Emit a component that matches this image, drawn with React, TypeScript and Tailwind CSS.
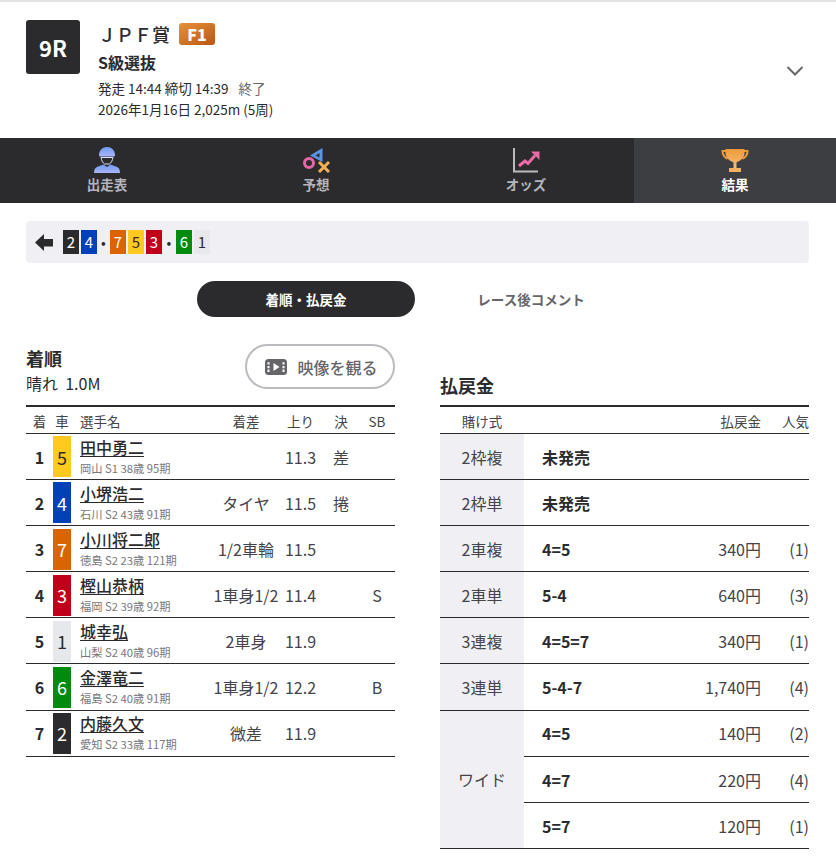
const font = { fontFamily: '"Noto Sans CJK JP", "Noto Sans", sans-serif' };

const bike: Record<number, string> = {
  1: 'bg-[#e6e8eb] text-[#2b2b2e]',
  2: 'bg-[#2b2b2e] text-white',
  3: 'bg-[#c0001a] text-white',
  4: 'bg-[#0040b8] text-white',
  5: 'bg-[#ffc91f] text-[#2b2b2e]',
  6: 'bg-[#008a0e] text-white',
  7: 'bg-[#dc6400] text-white',
};

const riders = [
  { pos: 1, no: 5, name: '田中勇二', info: '岡山 S1 38歳 95期', diff: '', last: '11.3', kim: '差', sb: '' },
  { pos: 2, no: 4, name: '小堺浩二', info: '石川 S2 43歳 91期', diff: 'タイヤ', last: '11.5', kim: '捲', sb: '' },
  { pos: 3, no: 7, name: '小川将二郎', info: '徳島 S2 23歳 121期', diff: '1/2車輪', last: '11.5', kim: '', sb: '' },
  { pos: 4, no: 3, name: '樫山恭柄', info: '福岡 S2 39歳 92期', diff: '1車身1/2', last: '11.4', kim: '', sb: 'S' },
  { pos: 5, no: 1, name: '城幸弘', info: '山梨 S2 40歳 96期', diff: '2車身', last: '11.9', kim: '', sb: '' },
  { pos: 6, no: 6, name: '金澤竜二', info: '福島 S2 40歳 91期', diff: '1車身1/2', last: '12.2', kim: '', sb: 'B' },
  { pos: 7, no: 2, name: '内藤久文', info: '愛知 S2 33歳 117期', diff: '微差', last: '11.9', kim: '', sb: '' },
];

const payouts = [
  { label: '2枠複', rows: [{ bet: '未発売', yen: '', pop: '' }] },
  { label: '2枠単', rows: [{ bet: '未発売', yen: '', pop: '' }] },
  { label: '2車複', rows: [{ bet: '4=5', yen: '340円', pop: '(1)' }] },
  { label: '2車単', rows: [{ bet: '5-4', yen: '640円', pop: '(3)' }] },
  { label: '3連複', rows: [{ bet: '4=5=7', yen: '340円', pop: '(1)' }] },
  { label: '3連単', rows: [{ bet: '5-4-7', yen: '1,740円', pop: '(4)' }] },
  {
    label: 'ワイド',
    rows: [
      { bet: '4=5', yen: '140円', pop: '(2)' },
      { bet: '4=7', yen: '220円', pop: '(4)' },
      { bet: '5=7', yen: '120円', pop: '(1)' },
    ],
  },
];

function HelmetIcon() {
  return (
    <svg width="28" height="28" viewBox="0 0 28 28">
      <defs>
        <linearGradient id="hg" x1="0" y1="0" x2="0" y2="1">
          <stop offset="0" stopColor="#6f9cf2" />
          <stop offset="1" stopColor="#a9b4f5" />
        </linearGradient>
      </defs>
      <path d="M6 9.500C6 4 9.500 1 14 1s8 3 8 8.500c0 .5-.5 1-1 1H7c-.5 0-1-.5-1-1z" fill="url(#hg)" />
      <path d="M8 11.500h12c-.5 3-2 5.500-3.500 6.500h-5C10 17 8.500 14.500 8 11.500z" fill="#2b2b2e" stroke="#dfe4f8" strokeWidth="1" />
      <path d="M1 27c0-3.500 1-5.500 4-6.500l5.500-2 3.500 2.500 3.500-2.500 5.500 2c3 1 4 3 4 6.500z" fill="url(#hg)" />
    </svg>
  );
}

function ShapesIcon() {
  return (
    <svg width="28" height="28" viewBox="0 0 28 28">
      <path d="M20.500 2v14L8 9.500z" fill="#5b94e6" />
      <path d="M17.500 7v4.500L13.500 9.500z" fill="#2b2b2e" />
      <circle cx="7" cy="17" r="4.500" fill="none" stroke="#e766a6" strokeWidth="3" />
      <path d="M17 16l10 10M27 16l-10 10" stroke="#f3b04e" strokeWidth="3" />
    </svg>
  );
}

function ChartIcon() {
  return (
    <svg width="28" height="28" viewBox="0 0 28 28">
      <path d="M2 2v23.500h24" fill="none" stroke="#b9bac0" strokeWidth="2" />
      <path d="M7 20l6-5 3 2.500 7-8" fill="none" stroke="#ec6aa6" strokeWidth="3" />
      <path d="M19 5.500h8.500V14z" fill="#ec6aa6" />
    </svg>
  );
}

function TrophyIcon() {
  return (
    <svg width="28" height="28" viewBox="0 0 28 28">
      <defs>
        <linearGradient id="tg" x1="0" y1="0" x2="0" y2="1">
          <stop offset="0" stopColor="#ee9a38" />
          <stop offset="1" stopColor="#f5bd7a" />
        </linearGradient>
      </defs>
      <path d="M4.500 3h19v4c0 5-4.500 8-8 9.500V22h-3v-5.500C9 15 4.500 12 4.500 7z" fill="url(#tg)" />
      <path d="M5 5H1.500c0 4 1.500 6 5 8M23 5h3.500c0 4-1.500 6-5 8" fill="none" stroke="#ee9a38" strokeWidth="2" />
      <path d="M8 22h12v4H8z" fill="#f3b263" />
    </svg>
  );
}

function FilmIcon() {
  return (
    <svg width="22" height="16" viewBox="0 0 22 16">
      <rect x="0" y="0" width="22" height="16" rx="3.500" fill="#66666a" />
      <path d="M8.500 4l6 4-6 4z" fill="#fff" />
      <path d="M2.500 3.200h2v2.300h-2zM2.500 6.900h2v2.300h-2zM2.500 10.600h2v2.300h-2zM17.500 3.200h2v2.300h-2zM17.500 6.900h2v2.300h-2zM17.500 10.600h2v2.300h-2z" fill="#fff" />
    </svg>
  );
}

function NavTab({ icon, label, width, active }: { icon: React.ReactNode; label: string; width: string; active?: boolean }) {
  return (
    <div className={`${width} flex flex-col items-center pt-[8px] ${active ? 'bg-[#3d3e42] text-white' : 'text-[#b4b6bd]'}`}>
      {icon}
      <span className="text-[13.5px] font-bold leading-[19px] mt-[1px]">{label}</span>
    </div>
  );
}

function Chip({ no }: { no: number }) {
  return <span className={`w-[16px] h-[24px] flex items-center justify-center text-[15px] ${bike[no]}`}>{no}</span>;
}

export default function App() {
  return (
    <div style={font} className="w-[836px] h-[862px] overflow-hidden bg-white text-[#2b2b2e]">
      <div className="h-[2px] bg-[#e4e4e6]" />
      <div className="h-[136px] flex items-start pl-[26px] pr-[32px] pt-[18px]">
        <div className="w-[54px] h-[54px] rounded-[3px] bg-[#2b2b2e] text-white flex items-center justify-center text-[22px] font-bold">9R</div>
        <div className="ml-[18px] flex-1 -mt-[1px]">
          <div className="flex items-center h-[30px]">
            <span className="text-lg font-medium leading-[30px]">ＪＰＦ賞</span>
            <span className="ml-[9px] w-[36px] h-[22px] rounded-[3px] bg-gradient-to-br from-[#e8913a] to-[#b9560f] text-white text-base font-black flex items-center justify-center">F1</span>
          </div>
          <div className="text-base font-bold leading-[26px]">S級選抜</div>
          <div className="text-[13.5px] leading-[21px] mt-[3px]">
            発走 14:44 締切 14:39<span className="ml-[10px] text-[#66666a]">終了</span>
          </div>
          <div className="text-[13.5px] leading-[21px]">2026年1月16日 2,025m (5周)</div>
        </div>
        <svg className="mt-[45px]" width="18" height="12" viewBox="0 0 18 12">
          <path d="M1.500 2l7.500 7.500L16.500 2" fill="none" stroke="#66666a" strokeWidth="2" />
        </svg>
      </div>

      <div className="h-[65px] flex bg-[#2b2b2e]">
        <NavTab icon={<HelmetIcon />} label="出走表" width="w-[214px]" />
        <NavTab icon={<ShapesIcon />} label="予想" width="w-[204px]" />
        <NavTab icon={<ChartIcon />} label="オッズ" width="w-[216px]" />
        <NavTab icon={<TrophyIcon />} label="結果" width="w-[202px]" active />
      </div>

      <div className="ml-[26px] mr-[27px] mt-[18px] h-[42px] rounded-[4px] bg-[#f0f0f4] flex items-center pl-[9px]">
        <svg width="18" height="17" viewBox="0 0 18 17">
          <path d="M0 8.500L9 0v5h9v7.500H9V17z" fill="#2b2b2e" />
        </svg>
        <div className="ml-[10px] flex items-center gap-[2px]">
          <Chip no={2} />
          <Chip no={4} />
          <span className="w-[9px] text-center text-sm leading-none">•</span>
          <Chip no={7} />
          <Chip no={5} />
          <Chip no={3} />
          <span className="w-[10px] text-center text-sm leading-none">•</span>
          <Chip no={6} />
          <Chip no={1} />
        </div>
      </div>

      <div className="mt-[18px] flex pl-[197px]">
        <div className="w-[218px] h-[36px] rounded-full bg-[#2b2b2e] text-white text-[13.5px] font-bold flex items-center justify-center">着順・払戻金</div>
        <div className="w-[232px] h-[36px] text-[#66666a] text-[13.5px] font-bold flex items-center justify-center">レース後コメント</div>
      </div>

      <div className="flex pl-[26px] pr-[27px] justify-between mt-[27px]">
        <div className="w-[369px]">
          <div className="h-[61px] flex justify-between items-start">
            <div>
              <div className="text-lg font-bold leading-[26px] mt-[1px]">着順</div>
              <div className="text-base leading-[22px] mt-[1px]">晴れ&nbsp;&nbsp;1.0M</div>
            </div>
            <div className="w-[150px] h-[45px] pl-[3px] rounded-full border-2 border-[#bcbcc0] flex items-center justify-center gap-[10px] text-[#66666a] text-base font-medium">
              <FilmIcon />
              映像を観る
            </div>
          </div>
          <div className="h-[29px] pt-[2px] border-t-2 border-b border-t-[#2b2b2e] border-b-[#2b2b2e] flex items-center text-[13.5px] text-[#44444a]">
            <span className="w-[27px] text-center">着</span>
            <span className="w-[18px] text-center">車</span>
            <span className="ml-[9px] w-[131px]">選手名</span>
            <span className="w-[70px] text-center">着差</span>
            <span className="w-[39px] text-center">上り</span>
            <span className="w-[42px] text-center">決</span>
            <span className="w-[30px] text-center">SB</span>
          </div>
          {riders.map((r) => (
            <div key={r.pos} className="h-[46.1px] pt-[0.6px] border-b border-[#2b2b2e] flex items-center">
              <span className="w-[27px] text-center text-base font-bold">{r.pos}</span>
              <span className={`w-[18px] h-[41px] flex items-center justify-center text-lg ${bike[r.no]}`}>{r.no}</span>
              <div className="ml-[9px] w-[131px]">
                <div className="text-base font-medium leading-[20px] underline underline-offset-2">{r.name}</div>
                <div className="text-[11.25px] text-[#77777c] leading-[18px] mt-[2px]">{r.info}</div>
              </div>
              <span className="w-[70px] text-center text-base text-[#44444a] whitespace-nowrap">{r.diff}</span>
              <span className="w-[39px] text-center text-base text-[#44444a]">{r.last}</span>
              <span className="w-[42px] text-center text-base text-[#44444a]">{r.kim}</span>
              <span className="w-[30px] text-center text-base text-[#44444a]">{r.sb}</span>
            </div>
          ))}
        </div>

        <div className="w-[369px]">
          <div className="h-[61px] flex items-end">
            <div className="text-lg font-bold leading-[26px] mb-[7px]">払戻金</div>
          </div>
          <div className="h-[29px] pt-[2px] border-t-2 border-b border-t-[#2b2b2e] border-b-[#2b2b2e] flex items-center text-[13.5px] text-[#44444a]">
            <span className="w-[84px] text-center">賭け式</span>
            <span className="flex-1 text-right pr-[21px]">払戻金</span>
            <span>人気</span>
          </div>
          {payouts.map((g) => (
            <div key={g.label} className="flex border-b border-[#2b2b2e]">
              <div className="w-[84px] shrink-0 bg-[#f0f0f4] flex items-center justify-center text-base text-[#44444a]">{g.label}</div>
              <div className="flex-1">
                {g.rows.map((row, i) => (
                  <div key={row.bet} className={`flex items-center pl-[18px] pt-[0.6px] ${i > 0 ? 'border-t border-[#2b2b2e] h-[46.1px]' : 'h-[45.1px]'}`}>
                    <span className="flex-1 text-base font-bold">{row.bet}</span>
                    <span className="text-base text-[#44444a]">{row.yen}</span>
                    <span className="w-[48px] text-right text-base text-[#44444a]">{row.pop}</span>
                  </div>
                ))}
              </div>
            </div>
          ))}
        </div>
      </div>
    </div>
  );
}
